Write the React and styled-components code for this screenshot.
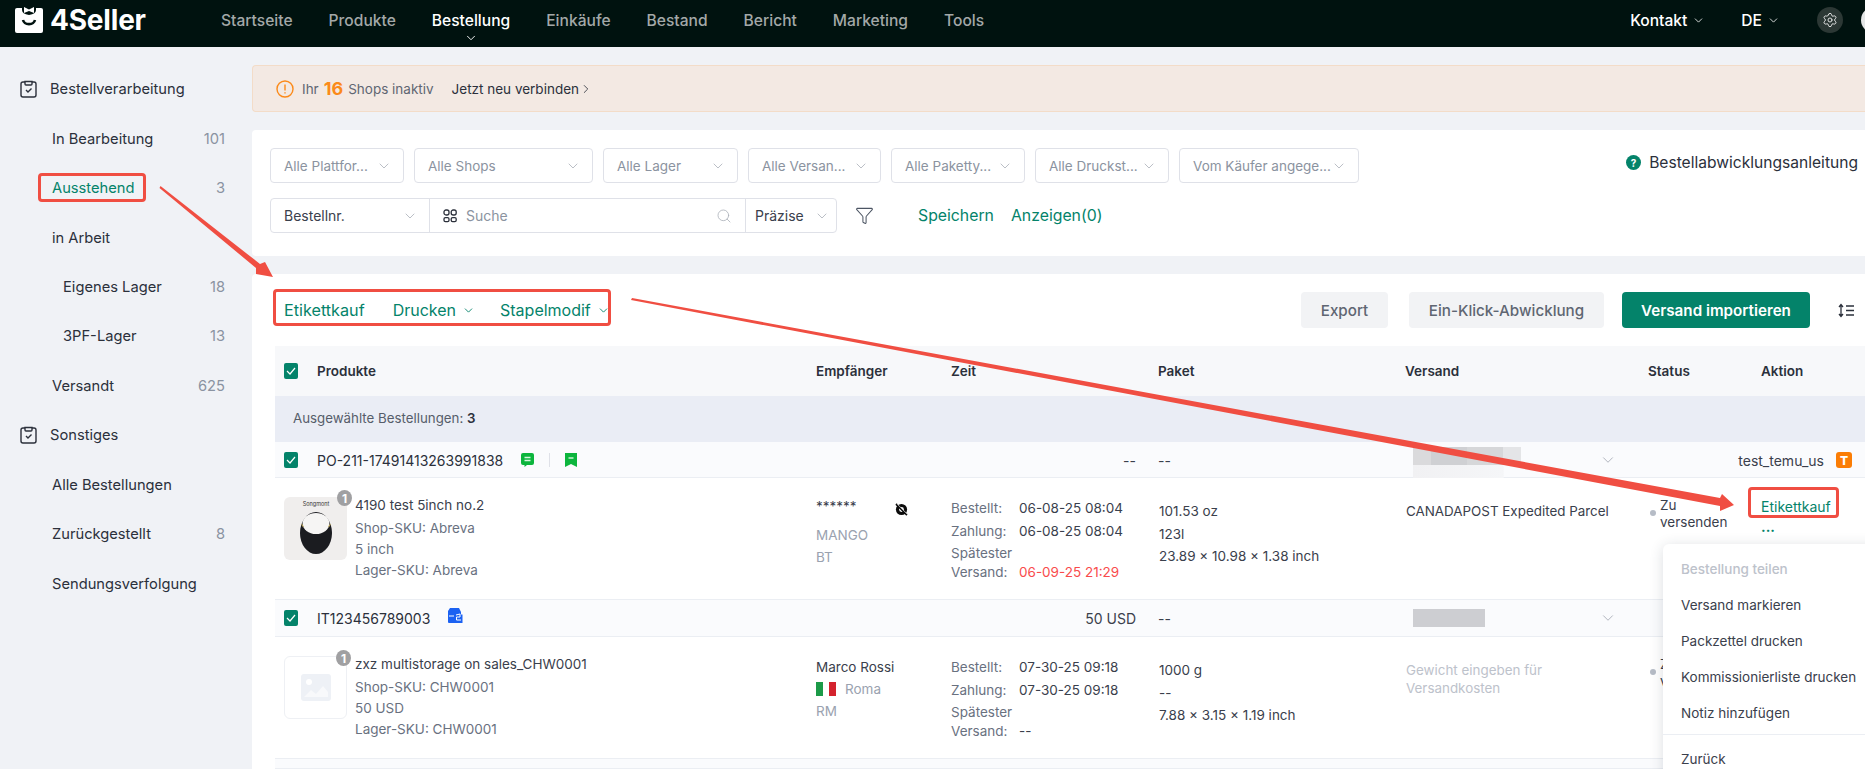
import React from "react";
import styled, { createGlobalStyle } from "styled-components";
import { ChevronDown, ChevronRight, Search, Funnel, Settings } from "lucide-react";

const green = "#04836a";

const GlobalStyle = createGlobalStyle`
  html, body {
    margin: 0;
    padding: 0;
    background: #f0f2f6;
  }
  body {
    font-family: Inter, "Liberation Sans", sans-serif;
    font-size: 14px;
    color: #2b303b;
    -webkit-font-smoothing: antialiased;
  }
  * { box-sizing: border-box; }
`;

const Page = styled.div`
  position: relative;
  width: 1865px;
  height: 769px;
  overflow: hidden;
`;

/* top bar */
const TopBar = styled.header`
  height: 47px;
  padding-bottom: 7px;
  background: #00120f;
  display: flex;
  align-items: center;
`;
const Brand = styled.div`
  width: 221px;
  padding-left: 15px;
  display: flex;
  align-items: center;
  gap: 7px;
  color: #fff;
  font-size: 28px;
  font-weight: 700;
  letter-spacing: -0.2px;
`;
const Nav = styled.nav`
  display: flex;
  gap: 36px;
`;
const NavItem = styled.div`
  position: relative;
  font-size: 15.6px;
  font-weight: 500;
  color: ${(p) => (p.$active ? "#fff" : "#a3a8a8")};
  svg {
    position: absolute;
    left: 50%;
    top: 20px;
    margin-left: -7px;
    color: #fff;
  }
`;
const TopRight = styled.div`
  margin-left: auto;
  display: flex;
  align-items: center;
  color: #fff;
  font-size: 15.6px;
  font-weight: 500;
`;
const TopLink = styled.div`
  display: flex;
  align-items: center;
  gap: 5px;
  margin-right: 36px;
`;
const GearCircle = styled.div`
  width: 26px;
  height: 26px;
  border-radius: 50%;
  background: #2c3835;
  color: #e8e8e8;
  display: flex;
  align-items: center;
  justify-content: center;
  margin-left: 1px;
  margin-right: 18px;
`;
const Avatar = styled.div`
  width: 26px;
  height: 26px;
  border-radius: 50%;
  background: #e4e6e6;
  margin-right: -22px;
`;

/* layout */
const Body = styled.div`
  display: flex;
  height: 722px;
`;
const Sidebar = styled.aside`
  width: 252px;
  flex: none;
  padding-top: 17.5px;
  font-size: 14.7px;
`;
const SideGroup = styled.div`
  height: 49.45px;
  display: flex;
  align-items: center;
  gap: 12px;
  padding-left: 19px;
  color: #2b303b;
`;
const SideItem = styled.div`
  height: 49.45px;
  display: flex;
  align-items: center;
  justify-content: space-between;
  padding-left: ${(p) => (p.$nested ? "63px" : "52px")};
  padding-right: 27px;
  color: ${(p) => (p.$active ? green : "#2b303b")};
  span {
    color: #8a93a1;
  }
`;
const Main = styled.main`
  flex: 1;
  min-width: 0;
  padding-top: 18px;
`;
const Banner = styled.div`
  height: 47px;
  background: #f3e9e3;
  border: 1px solid #f3dcc8;
  border-right: none;
  border-radius: 4px 0 0 4px;
  display: flex;
  align-items: center;
  padding-left: 23px;
  margin-bottom: 18px;
  color: #5f6672;
  font-size: 13.5px;
`;
const BannerText = styled.span`
  margin-left: 8px;
`;
const BannerCount = styled.b`
  color: #fb8a1a;
  font-size: 18px;
  font-weight: 700;
  margin: 0 5px;
`;
const BannerLink = styled.span`
  color: #2b303b;
  margin-left: 18px;
  display: flex;
  align-items: center;
`;

/* filter panel */
const FilterPanel = styled.section`
  height: 126px;
  background: #fff;
  border-radius: 4px 0 0 4px;
  padding: 18px 0 0 18px;
  margin-bottom: 18px;
  position: relative;
`;
const FilterRow = styled.div`
  display: flex;
  gap: 10px;
  margin-bottom: 15px;
`;
const Select = styled.div`
  width: ${(p) => p.$w}px;
  height: 35px;
  border: 1px solid #dfe1e8;
  border-radius: 4px;
  display: flex;
  align-items: center;
  justify-content: space-between;
  padding: 0 11px 0 13px;
  color: #8b93a0;
  font-size: 13.5px;
  white-space: nowrap;
  svg {
    color: #a9aeb8;
    flex: none;
  }
`;
const SearchRow = styled.div`
  display: flex;
  align-items: center;
`;
const SearchGroup = styled.div`
  display: flex;
  height: 35px;
  border: 1px solid #dfe1e8;
  border-radius: 4px;
  color: #3a404c;
`;
const SearchPart = styled.div`
  width: ${(p) => p.$w}px;
  display: flex;
  align-items: center;
  justify-content: space-between;
  padding: 0 ${(p) => p.$pr || 11}px 0 ${(p) => p.$pl || 13}px;
  & + & {
    border-left: 1px solid #dfe1e8;
  }
  svg {
    color: #a9aeb8;
    flex: none;
  }
`;
const SearchHint = styled.div`
  display: flex;
  align-items: center;
  gap: 9px;
  color: #8b93a0;
`;
const FilterButton = styled.div`
  margin-left: 18px;
  margin-right: 44px;
  display: flex;
  color: #4c5563;
`;
const GreenLink = styled.span`
  color: ${green};
  font-size: ${(p) => p.$size || 15.8}px;
  margin-right: ${(p) => p.$mr || 0}px;
  white-space: nowrap;
  display: inline-flex;
  align-items: center;
  gap: 6px;
`;
const Guide = styled.div`
  position: absolute;
  right: 7px;
  top: 23px;
  display: flex;
  align-items: center;
  gap: 8px;
  font-size: 15.6px;
  color: #2b303b;
`;
const GuideMark = styled.span`
  width: 15px;
  height: 15px;
  border-radius: 50%;
  background: ${green};
  color: #fff;
  font-size: 10px;
  font-weight: 700;
  display: flex;
  align-items: center;
  justify-content: center;
`;

/* orders panel */
const OrdersPanel = styled.section`
  background: #fff;
  border-radius: 4px 0 0 0;
  padding-left: 23px;
  height: 495px;
`;
const Toolbar = styled.div`
  height: 72px;
  padding: 18px 11px 18px 9px;
  display: flex;
  align-items: center;
`;
const ToolLinks = styled.div`
  display: flex;
  align-items: center;
  flex: 1;
`;
const ToolButton = styled.div`
  height: 36px;
  width: ${(p) => p.$w}px;
  margin-right: ${(p) => p.$mr}px;
  border-radius: 4px;
  background: ${(p) => (p.$primary ? green : "#f2f3f5")};
  color: ${(p) => (p.$primary ? "#fff" : "#5f6672")};
  font-size: 15.2px;
  font-weight: ${(p) => (p.$primary ? 600 : 500)};
  display: flex;
  align-items: center;
  justify-content: center;
  white-space: nowrap;
`;
const columns = "541px 135px 207px 247px 243px 113px 104px";
const HeadRow = styled.div`
  display: grid;
  grid-template-columns: ${columns};
  height: 50px;
  align-items: center;
  background: #f7f8fa;
  font-weight: 600;
  font-size: 13.5px;
  color: #2b303b;
`;
const CheckCell = styled.div`
  display: flex;
  align-items: center;
  gap: 19px;
  padding-left: 9px;
`;
const Check = styled.span`
  width: 14px;
  height: 16px;
  border-radius: 2px;
  background: ${green};
  display: flex;
  align-items: center;
  justify-content: center;
  flex: none;
`;
const SelectedBar = styled.div`
  height: 46px;
  padding-bottom: 2px;
  background: #eaedf5;
  display: flex;
  align-items: center;
  padding-left: 18px;
  font-size: 13.3px;
  color: #565d6a;
  b {
    color: #2b303b;
    font-weight: 600;
  }
`;
const OrderHead = styled.div`
  display: grid;
  grid-template-columns: ${columns};
  height: ${(p) => p.$h}px;
  align-items: center;
  background: #fafbfd;
  border-bottom: 1px solid #ebeef3;
  color: #2b303b;
`;
const OrderBadges = styled.div`
  display: flex;
  align-items: center;
  gap: 15px;
  margin-left: -1px;
`;
const StoreMark = styled.span`
  display: flex;
  margin: -6px 0 0 -1px;
`;
const Rule = styled.i`
  width: 1px;
  height: 14px;
  background: #dfe1e8;
`;
const Amount = styled.div`
  grid-column: 2 / 4;
  text-align: right;
  padding-right: 22px;
  color: #3a404c;
`;
const ParcelDash = styled.div`
  grid-column: 4;
  color: #3a404c;
`;
const CarrierCell = styled.div`
  display: flex;
  align-items: center;
  justify-content: space-between;
  padding: 0 31px 0 8px;
  svg {
    color: #a9aeb8;
  }
`;
const Blur = styled.div`
  width: ${(p) => p.$w}px;
  height: 18px;
  background: #cdced2;
`;
const FadedBlur = styled.div`
  width: 108px;
  height: 31px;
  align-self: flex-start;
  margin-top: 5px;
  background:
    linear-gradient(90deg, #dadadc 0 17%, #cfd0d3 17% 50%, #d6d7d9 50% 83%, #e4e5e7 83%) top left / 100% 18px no-repeat,
    linear-gradient(90deg, #f1f1f3, #f5f6f8) bottom left / 84% 13px no-repeat;
`;
const ShopCell = styled.div`
  grid-column: 6 / 8;
  display: flex;
  justify-content: flex-end;
  align-items: center;
  gap: 12px;
  padding-right: 13px;
  color: #3a404c;
`;
const PlatformMark = styled.span`
  width: 16px;
  height: 16px;
  border-radius: 3px;
  background: #fb7d05;
  color: #fff;
  font-size: 12px;
  font-weight: 800;
  display: flex;
  align-items: center;
  justify-content: center;
`;
const OrderRow = styled.div`
  display: grid;
  grid-template-columns: ${columns};
  height: 122px;
  border-bottom: 1px solid #ebeef3;
  font-size: 13.5px;
  color: #3a404c;
`;
const ProductCell = styled.div`
  display: flex;
  padding: 17px 0 0 9px;
`;
const Thumb = styled.div`
  position: relative;
  width: 63px;
  height: 63px;
  margin-top: 2px;
  margin-right: 8px;
  border-radius: 6px;
  flex: none;
  background: ${(p) => (p.$empty ? "#fff" : "#f0eeed")};
  border: ${(p) => (p.$empty ? "1px solid #eef0f4" : "none")};
  display: flex;
  align-items: center;
  justify-content: center;
`;
const CountBadge = styled.span`
  position: absolute;
  right: -5px;
  top: -7px;
  width: 15px;
  height: 16px;
  border-radius: 50%;
  background: #a0a0a2;
  color: #fff;
  font-size: 12px;
  font-weight: 700;
  display: flex;
  align-items: center;
  justify-content: center;
`;
const ProductName = styled.div`
  line-height: 21px;
  margin-bottom: 2px;
  color: #3a404c;
`;
const ProductMeta = styled.div`
  line-height: 21px;
  color: #69717f;
`;
const ReceiverCell = styled.div`
  padding-top: ${(p) => (p.$masked ? "17px" : "19px")};
  line-height: 22px;
  color: #9aa2af;
`;
const ReceiverName = styled.div`
  position: relative;
  color: #3a404c;
  margin-bottom: ${(p) => (p.$masked ? "7px" : "0")};
  svg {
    position: absolute;
    left: 79px;
    top: 8px;
  }
`;
const CityLine = styled.div`
  display: flex;
  align-items: center;
  gap: 9px;
`;
const Flag = styled.span`
  width: 20px;
  height: 14px;
  background: linear-gradient(90deg, #1c9a48 33%, #fff 33%, #fff 66%, #d4232e 66%);
`;
const TimeCell = styled.div`
  padding-top: 20px;
`;
const TimeLine = styled.div`
  display: grid;
  grid-template-columns: 68px 1fr;
  align-items: end;
  line-height: ${(p) => (p.$tall ? "19px" : "20px")};
  margin-bottom: ${(p) => (p.$tall ? "0" : "3px")};
  span:first-child {
    color: #69717f;
  }
  span:last-child {
    color: ${(p) => (p.$late ? "#f94b4b" : "#3a404c")};
  }
`;
const ParcelCell = styled.div`
  padding: 22px 0 0 1px;
  line-height: 22.5px;
`;
const ShippingCell = styled.div`
  padding: 24px 20px 0 1px;
  line-height: 18px;
  font-size: 13.4px;
  color: ${(p) => (p.$hint ? "#bdc2cb" : "#3a404c")};
`;
const StatusCell = styled.div`
  position: relative;
  padding: 19px 0 0 12px;
  line-height: 16.5px;
  &::before {
    content: "";
    position: absolute;
    left: 2px;
    top: 32px;
    width: 6px;
    height: 6px;
    border-radius: 50%;
    background: #b6bcc6;
  }
`;
const ActionCell = styled.div`
  position: relative;
  padding-top: 20px;
  font-size: 14px;
  color: ${green};
  line-height: 18px;
`;
const Dots = styled.div`
  font-weight: 700;
  line-height: 12px;
  margin-top: 5px;
`;
const Menu = styled.div`
  position: absolute;
  left: -98px;
  top: 66px;
  width: 220px;
  padding: 7px 0;
  background: #fff;
  border-radius: 6px 0 0 0;
  box-shadow: 0 2px 14px rgba(40, 50, 70, 0.16);
  color: #3a404c;
  font-size: 13.5px;
  z-index: 5;
`;
const MenuItem = styled.div`
  height: 36px;
  display: flex;
  align-items: center;
  padding-left: 18px;
  white-space: nowrap;
  color: ${(p) => (p.$disabled ? "#bdc2cb" : "#3a404c")};
  font-weight: ${(p) => (p.$disabled ? 500 : 400)};
`;
const MenuRule = styled.div`
  height: 1px;
  margin: 3px 0 6px;
  background: #ebeef3;
`;

/* red marks drawn over the screenshot */
const RedBox = styled.div`
  position: absolute;
  left: ${(p) => p.$x}px;
  top: ${(p) => p.$y}px;
  width: ${(p) => p.$w}px;
  height: ${(p) => p.$h}px;
  border: 3.5px solid #f04e42;
  border-radius: 4px;
  z-index: 10;
`;
const ArrowLayer = styled.svg`
  position: absolute;
  left: 0;
  top: 0;
  z-index: 10;
  pointer-events: none;
`;

const Tick = () => (
  <svg width="10" height="8" viewBox="0 0 10 8" fill="none" stroke="#fff" strokeWidth="1.2">
    <path d="M1 4l3 3 5-6" />
  </svg>
);

const Logo = () => (
  <svg width="28" height="26" viewBox="0 0 28 26">
    <rect y="1" width="28" height="25" rx="2" fill="#fff" />
    <path fill="#00120f" d="M7 0v3q0 4 7 5 7-1 7-5V0z" />
    <path fill="#fff" d="M9 0l5 2.5L19 0v6l-5-2-5 2z" />
    <path d="M8 13c1.5 5.5 10.5 5.5 12 0" fill="none" stroke="#00120f" strokeWidth="2.6" />
  </svg>
);

const ClipIcon = () => (
  <svg width="19" height="19" viewBox="0 0 19 19" fill="none" stroke="#2b303b" strokeWidth="1.4">
    <path d="M6 2H4a2 2 0 0 0-2 2v11a2 2 0 0 0 2 2h11a2 2 0 0 0 2-2V4a2 2 0 0 0-2-2h-2" />
    <path d="M6 1.5h7V4a1 1 0 0 1-1 1H7a1 1 0 0 1-1-1z" />
    <path d="M7 10l2 2 3.5-3.5" />
  </svg>
);

const AlertIcon = () => (
  <svg width="18" height="18" viewBox="0 0 18 18" fill="none" stroke="#fb8a1a" strokeWidth="1.4">
    <circle cx="9" cy="9" r="8" />
    <path d="M9 4.5v6M9 12.2v1.4" />
  </svg>
);

const ScanIcon = () => (
  <svg width="14" height="14" viewBox="0 0 14 14" fill="none" stroke="#2b303b" strokeWidth="1.3">
    <rect x="1" y="1" width="5" height="5" rx="2" />
    <rect x="8.2" y="1" width="5" height="5" rx="2" />
    <rect x="1" y="8.6" width="5" height="4" rx="1.4" />
    <rect x="8.2" y="8.6" width="5" height="4" rx="1.4" />
  </svg>
);

const SortIcon = () => (
  <svg width="16" height="15" viewBox="0 0 16 15" fill="none" stroke="#2b303b" strokeWidth="1.3">
    <path d="M3 2v11M1 4l2-2.4L5 4M1 11l2 2.4L5 11M8 3h8M8 7.5h8M8 12h8" />
  </svg>
);

const ChatIcon = () => (
  <svg width="13" height="14" viewBox="0 0 13 14">
    <path fill="#0cb53d" d="M2 0h9a2 2 0 0 1 2 2v8a2 2 0 0 1-2 2H6l-2.5 2v-2H2a2 2 0 0 1-2-2V2a2 2 0 0 1 2-2z" />
    <path stroke="#d8f6e0" strokeWidth="1.4" d="M3.5 4.5h6M3.5 7.5h6" />
  </svg>
);

const BookmarkIcon = () => (
  <svg width="12" height="14" viewBox="0 0 12 14">
    <path fill="#0cb53d" d="M0 0h12v14l-6-3-6 3z" />
    <path stroke="#d8f6e0" strokeWidth="1.4" d="M3.5 5h5" />
  </svg>
);

const StoreIcon = () => (
  <svg width="15" height="15" viewBox="0 0 15 15">
    <path fill="#1c62f2" d="M2 0h9l2 4v2.5h1.5V15H1a1 1 0 0 1-1-1V3z" />
    <path stroke="#fff" strokeWidth="1" fill="none" d="M1 8h5M8 7l4-1v3h-3.5v3H13" />
  </svg>
);

const EyeOffIcon = () => (
  <svg width="13" height="13" viewBox="0 0 13 13">
    <circle cx="6.5" cy="6.5" r="5.6" fill="#0c0c0c" />
    <circle cx="6.5" cy="6.5" r="2.4" fill="#fff" />
    <path d="M1 1l11 11" stroke="#0c0c0c" strokeWidth="1.8" />
    <path d="M2.4 1.2l10 10" stroke="#fff" strokeWidth="0.7" />
  </svg>
);

const BagPicture = () => (
  <svg width="63" height="63" viewBox="0 0 63 63">
    <text x="32" y="9" textAnchor="middle" fontSize="5.5" fontFamily="Inter, sans-serif" fill="#333">
      Songmont
    </text>
    <ellipse cx="32" cy="36" rx="16" ry="21" fill="#1b1c20" />
    <ellipse cx="32" cy="26.5" rx="13.4" ry="10.5" fill="#f6f5f4" />
    <path d="M17.5 27l2 3M46.5 27l-2 3" stroke="#b9a660" strokeWidth="1.2" />
  </svg>
);

const PicturePlaceholder = () => (
  <svg width="30" height="27" viewBox="0 0 30 27">
    <rect width="30" height="27" rx="3" fill="#eef1f6" />
    <circle cx="8" cy="8" r="3" fill="#fff" />
    <path d="M3 23l7-7 5 4 7-8 5 6v5z" fill="#f8f9fb" />
  </svg>
);

const navItems = ["Startseite", "Produkte", "Bestellung", "Einkäufe", "Bestand", "Bericht", "Marketing", "Tools"];

const filters = [
  ["Alle Plattfor...", 134],
  ["Alle Shops", 179],
  ["Alle Lager", 135],
  ["Alle Versan...", 133],
  ["Alle Paketty...", 134],
  ["Alle Druckst...", 134],
  ["Vom Käufer angege...", 180],
];

const Chevron = ({ size = 16 }) => <ChevronDown size={size} strokeWidth={1.2} />;

const TimeBlock = ({ ordered, paid, due, late }) => (
  <TimeCell>
    <TimeLine>
      <span>Bestellt:</span>
      <span>{ordered}</span>
    </TimeLine>
    <TimeLine>
      <span>Zahlung:</span>
      <span>{paid}</span>
    </TimeLine>
    <TimeLine $tall>
      <span>Spätester</span>
      <span />
    </TimeLine>
    <TimeLine $tall $late={late}>
      <span>Versand:</span>
      <span>{due}</span>
    </TimeLine>
  </TimeCell>
);

export default function App() {
  return (
    <Page>
      <GlobalStyle />
      <TopBar>
        <Brand>
          <Logo />
          4Seller
        </Brand>
        <Nav>
          {navItems.map((item) => (
            <NavItem key={item} $active={item === "Bestellung"}>
              {item}
              {item === "Bestellung" && <ChevronDown size={14} strokeWidth={1.6} />}
            </NavItem>
          ))}
        </Nav>
        <TopRight>
          <TopLink>
            Kontakt <ChevronDown size={13} strokeWidth={1.5} />
          </TopLink>
          <TopLink>
            DE <ChevronDown size={13} strokeWidth={1.5} />
          </TopLink>
          <GearCircle>
            <Settings size={16} strokeWidth={1.4} />
          </GearCircle>
          <Avatar />
        </TopRight>
      </TopBar>

      <Body>
        <Sidebar>
          <SideGroup>
            <ClipIcon />
            Bestellverarbeitung
          </SideGroup>
          <SideItem>
            In Bearbeitung <span>101</span>
          </SideItem>
          <SideItem $active>
            Ausstehend <span>3</span>
          </SideItem>
          <SideItem>in Arbeit</SideItem>
          <SideItem $nested>
            Eigenes Lager <span>18</span>
          </SideItem>
          <SideItem $nested>
            3PF-Lager <span>13</span>
          </SideItem>
          <SideItem>
            Versandt <span>625</span>
          </SideItem>
          <SideGroup>
            <ClipIcon />
            Sonstiges
          </SideGroup>
          <SideItem>Alle Bestellungen</SideItem>
          <SideItem>
            Zurückgestellt <span>8</span>
          </SideItem>
          <SideItem>Sendungsverfolgung</SideItem>
        </Sidebar>

        <Main>
          <Banner>
            <AlertIcon />
            <BannerText>Ihr</BannerText>
            <BannerCount>16</BannerCount>
            Shops inaktiv
            <BannerLink>
              Jetzt neu verbinden <ChevronRight size={14} strokeWidth={1.4} />
            </BannerLink>
          </Banner>

          <FilterPanel>
            <FilterRow>
              {filters.map(([label, w]) => (
                <Select key={label} $w={w}>
                  {label}
                  <Chevron />
                </Select>
              ))}
            </FilterRow>
            <SearchRow>
              <SearchGroup>
                <SearchPart $w={158}>
                  Bestellnr.
                  <Chevron />
                </SearchPart>
                <SearchPart $w={316} $pr={13}>
                  <SearchHint>
                    <ScanIcon />
                    Suche
                  </SearchHint>
                  <Search size={16} strokeWidth={1.2} />
                </SearchPart>
                <SearchPart $w={91} $pl={9} $pr={6}>
                  Präzise
                  <Chevron />
                </SearchPart>
              </SearchGroup>
              <FilterButton>
                <Funnel size={19} strokeWidth={1.3} />
              </FilterButton>
              <GreenLink $mr={17}>Speichern</GreenLink>
              <GreenLink>Anzeigen(0)</GreenLink>
            </SearchRow>
            <Guide>
              <GuideMark>?</GuideMark>
              Bestellabwicklungsanleitung
            </Guide>
          </FilterPanel>

          <OrdersPanel>
            <Toolbar>
              <ToolLinks>
                <GreenLink $size={16.2} $mr={28}>
                  Etikettkauf
                </GreenLink>
                <GreenLink $size={16} $mr={25}>
                  Drucken <ChevronDown size={13} strokeWidth={1.7} />
                </GreenLink>
                <GreenLink $size={16}>
                  Stapelmodif <ChevronDown size={13} strokeWidth={1.7} />
                </GreenLink>
              </ToolLinks>
              <ToolButton $w={87} $mr={21}>
                Export
              </ToolButton>
              <ToolButton $w={195} $mr={18}>
                Ein-Klick-Abwicklung
              </ToolButton>
              <ToolButton $w={188} $mr={28} $primary>
                Versand importieren
              </ToolButton>
              <SortIcon />
            </Toolbar>

            <HeadRow>
              <CheckCell>
                <Check>
                  <Tick />
                </Check>
                Produkte
              </CheckCell>
              <div>Empfänger</div>
              <div>Zeit</div>
              <div>Paket</div>
              <div>Versand</div>
              <div>Status</div>
              <div>Aktion</div>
            </HeadRow>
            <SelectedBar>
              Ausgewählte Bestellungen:&nbsp;<b>3</b>
            </SelectedBar>

            <OrderHead $h={36}>
              <CheckCell>
                <Check>
                  <Tick />
                </Check>
                PO-211-17491413263991838
                <OrderBadges>
                  <ChatIcon />
                  <Rule />
                  <BookmarkIcon />
                </OrderBadges>
              </CheckCell>
              <Amount>--</Amount>
              <ParcelDash>--</ParcelDash>
              <CarrierCell>
                <FadedBlur />
                <Chevron size={18} />
              </CarrierCell>
              <ShopCell>
                test_temu_us <PlatformMark>T</PlatformMark>
              </ShopCell>
            </OrderHead>
            <OrderRow>
              <ProductCell>
                <Thumb>
                  <BagPicture />
                  <CountBadge>1</CountBadge>
                </Thumb>
                <div>
                  <ProductName>4190 test 5inch no.2</ProductName>
                  <ProductMeta>Shop-SKU: Abreva</ProductMeta>
                  <ProductMeta>5 inch</ProductMeta>
                  <ProductMeta>Lager-SKU: Abreva</ProductMeta>
                </div>
              </ProductCell>
              <ReceiverCell $masked>
                <ReceiverName $masked>
                  ******
                  <EyeOffIcon />
                </ReceiverName>
                <div>MANGO</div>
                <div>BT</div>
              </ReceiverCell>
              <TimeBlock ordered="06-08-25 08:04" paid="06-08-25 08:04" due="06-09-25 21:29" late />
              <ParcelCell>
                <div>101.53 oz</div>
                <div>123l</div>
                <div>23.89 × 10.98 × 1.38 inch</div>
              </ParcelCell>
              <ShippingCell>CANADAPOST Expedited Parcel</ShippingCell>
              <StatusCell>
                Zu
                <br />
                versenden
              </StatusCell>
              <ActionCell>
                Etikettkauf
                <Dots>...</Dots>
                <Menu>
                  <MenuItem $disabled>Bestellung teilen</MenuItem>
                  <MenuItem>Versand markieren</MenuItem>
                  <MenuItem>Packzettel drucken</MenuItem>
                  <MenuItem>Kommissionierliste drucken</MenuItem>
                  <MenuItem>Notiz hinzufügen</MenuItem>
                  <MenuRule />
                  <MenuItem>Zurück</MenuItem>
                </Menu>
              </ActionCell>
            </OrderRow>

            <OrderHead $h={37}>
              <CheckCell>
                <Check>
                  <Tick />
                </Check>
                IT123456789003
                <StoreMark>
                  <StoreIcon />
                </StoreMark>
              </CheckCell>
              <Amount>50 USD</Amount>
              <ParcelDash>--</ParcelDash>
              <CarrierCell>
                <Blur $w={72} />
                <Chevron size={18} />
              </CarrierCell>
            </OrderHead>
            <OrderRow>
              <ProductCell>
                <Thumb $empty>
                  <PicturePlaceholder />
                  <CountBadge>1</CountBadge>
                </Thumb>
                <div>
                  <ProductName>zxz multistorage on sales_CHW0001</ProductName>
                  <ProductMeta>Shop-SKU: CHW0001</ProductMeta>
                  <ProductMeta>50 USD</ProductMeta>
                  <ProductMeta>Lager-SKU: CHW0001</ProductMeta>
                </div>
              </ProductCell>
              <ReceiverCell>
                <ReceiverName>Marco Rossi</ReceiverName>
                <CityLine>
                  <Flag />
                  Roma
                </CityLine>
                <div>RM</div>
              </ReceiverCell>
              <TimeBlock ordered="07-30-25 09:18" paid="07-30-25 09:18" due="--" />
              <ParcelCell>
                <div>1000 g</div>
                <div>--</div>
                <div>7.88 × 3.15 × 1.19 inch</div>
              </ParcelCell>
              <ShippingCell $hint>Gewicht eingeben für Versandkosten</ShippingCell>
              <StatusCell>
                Zu
                <br />
                versenden
              </StatusCell>
              <div />
            </OrderRow>
            <OrderHead $h={10} />
          </OrdersPanel>
        </Main>
      </Body>

      <RedBox $x={38} $y={173} $w={108} $h={29} />
      <RedBox $x={273} $y={289} $w={338} $h={37} />
      <RedBox $x={1748} $y={487} $w={91} $h={31} />
      <ArrowLayer width="1865" height="769" viewBox="0 0 1865 769">
        <path fill="#f04e42" d="M160.5 186L260 264l5-2 8 15-17-3v-6L159.5 188z" />
        <path fill="#f04e42" d="M632 298L1720 498l2-4 12 11-14 6v-5L631 300z" />
      </ArrowLayer>
    </Page>
  );
}
